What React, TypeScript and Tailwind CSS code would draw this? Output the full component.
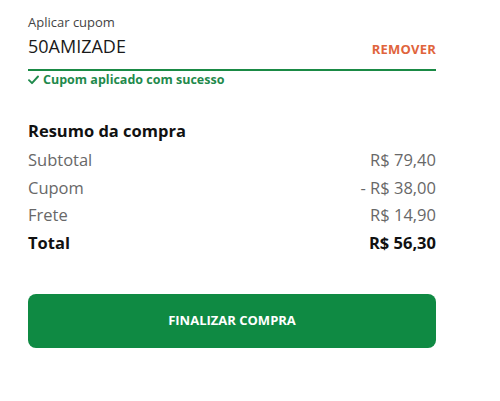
import React from 'react';

const rows = [
  { label: 'Subtotal', value: 'R$ 79,40' },
  { label: 'Cupom', value: '- R$ 38,00' },
  { label: 'Frete', value: 'R$ 14,90' },
];

export default function App() {
  return (
    <div className="min-h-[401px] w-[500px] bg-white" style={{ fontFamily: '"Open Sans", "Noto Sans", sans-serif' }}>
      <div className="ml-7 w-[408px] pt-[14px]">
        {/* Coupon input */}
        <div className="text-[13px] leading-[17px] text-[#444]">Aplicar cupom</div>
        <div className="mt-[3px] flex items-end justify-between border-b-2 border-[#1a8a45] pb-[11px]">
          <span className="text-[18px] leading-[24px] text-[#1a1a1a]">50AMIZADE</span>
          <button className="text-[13px] font-bold leading-[18px] tracking-[0.2px] text-[#e0643c]">REMOVER</button>
        </div>
        <div className="mt-[1px] flex items-center gap-[4px] text-[12.5px] font-bold leading-[16px] text-[#1f8a4c]">
          <svg width="11" height="10" viewBox="0 0 11 10" fill="none">
            <path d="M1 5.2 L4 8.2 L10 1.5" stroke="#1f8a4c" strokeWidth="1.9" strokeLinecap="round" strokeLinejoin="round" />
          </svg>
          <span>Cupom aplicado com sucesso</span>
        </div>

        {/* Summary */}
        <div className="mt-[32px] text-[16.5px] font-bold leading-[22px] text-[#111]">Resumo da compra</div>
        <div className="mt-[4px]">
          {rows.map((r) => (
            <div key={r.label} className="flex justify-between text-[16.5px] leading-[27.5px] text-[#686868]">
              <span>{r.label}</span>
              <span>{r.value}</span>
            </div>
          ))}
          <div className="flex justify-between text-[16.5px] font-bold leading-[27.5px] text-[#111]">
            <span>Total</span>
            <span>R$ 56,30</span>
          </div>
        </div>

        <button className="mt-[38px] flex h-[54px] w-full items-center justify-center rounded-[8px] bg-[#0f8a43] text-[13px] font-bold text-white">
          FINALIZAR COMPRA
        </button>
      </div>
    </div>
  );
}
